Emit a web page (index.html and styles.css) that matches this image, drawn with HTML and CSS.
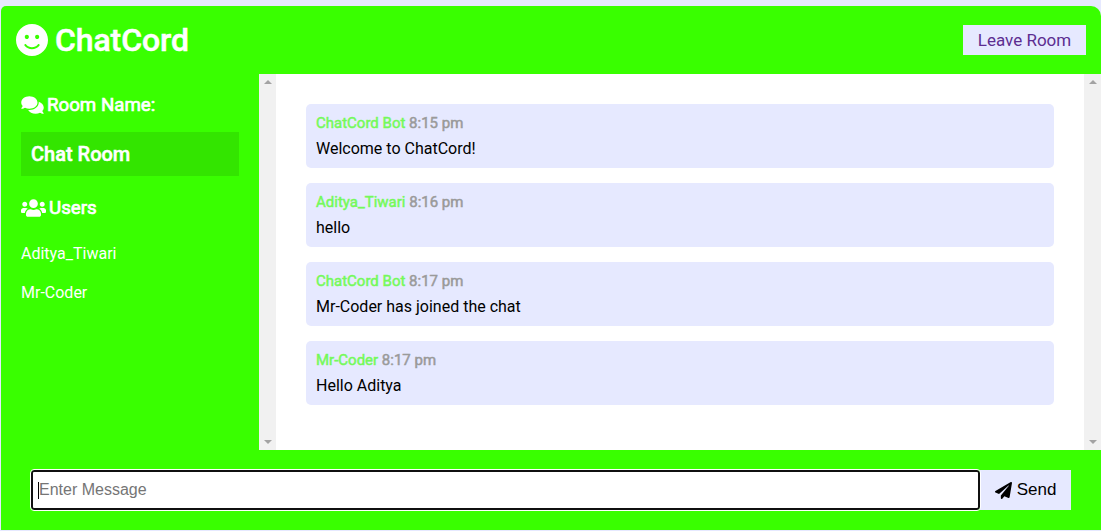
FILE: index.html
```html
<!DOCTYPE html>
<html lang="en">
<head>
<meta charset="UTF-8">
<meta name="viewport" content="width=device-width, initial-scale=1.0">
<title>ChatCord</title>
<link rel="stylesheet" href="styles.css">
</head>
<body>
	<div class="chat-container">
		<header class="chat-header">
			<h1>
				<svg class="logo-icon" viewBox="0 0 496 512"><path fill="currentColor" d="M248 8C111 8 0 119 0 256s111 248 248 248 248-111 248-248S385 8 248 8zm80 168c17.7 0 32 14.3 32 32s-14.3 32-32 32-32-14.3-32-32 14.3-32 32-32zm-160 0c17.7 0 32 14.3 32 32s-14.3 32-32 32-32-14.3-32-32 14.3-32 32-32zm194.8 170.2C334.3 380.4 292.5 400 248 400s-86.3-19.6-114.8-53.8c-13.6-16.3 11-36.7 24.6-20.5 22.4 26.9 55.2 42.2 90.2 42.2s67.8-15.4 90.2-42.2c13.4-16.2 38.1 4.2 24.6 20.5z"/></svg>
				ChatCord
			</h1>
			<a class="btn leave-btn" href="#">Leave Room</a>
		</header>
		<main class="chat-main">
			<div class="chat-sidebar">
				<h3>
					<svg class="side-icon" viewBox="0 0 576 512"><path fill="currentColor" d="M416 192c0-88.4-93.1-160-208-160S0 103.6 0 192c0 34.3 14.1 65.9 38 92-13.4 30.2-35.5 54.2-35.8 54.5-2.2 2.3-2.8 5.7-1.5 8.7S4.8 352 8 352c36.6 0 66.9-12.3 88.7-25 32.2 15.7 70.3 25 111.3 25 114.9 0 208-71.6 208-160zm122 220c23.9-26 38-57.7 38-92 0-66.9-53.5-124.2-129.3-148.1.9 6.6 1.3 13.3 1.3 20.1 0 105.9-107.7 192-240 192-10.8 0-21.3-.8-31.7-1.9C207.8 439.6 281.8 480 368 480c41 0 79.1-9.2 111.3-25 21.8 12.7 52.1 25 88.7 25 3.2 0 6.1-1.9 7.3-4.8 1.3-2.9.7-6.3-1.5-8.7-.3-.3-22.4-24.2-35.8-54.5z"/></svg>
					Room Name:
				</h3>
				<h2 class="room-name">Chat Room</h2>
				<h3>
					<svg class="side-icon users-icon" viewBox="0 0 640 512"><path fill="currentColor" d="M96 224c35.3 0 64-28.7 64-64s-28.7-64-64-64-64 28.7-64 64 28.7 64 64 64zm448 0c35.3 0 64-28.7 64-64s-28.7-64-64-64-64 28.7-64 64 28.7 64 64 64zm32 32h-64c-17.6 0-33.5 7.1-45.1 18.6 40.3 22.1 68.9 62 75.1 109.4h66c17.7 0 32-14.3 32-32v-32c0-35.3-28.7-64-64-64zm-256 0c61.9 0 112-50.1 112-112S381.9 32 320 32 208 82.1 208 144s50.1 112 112 112zm76.8 32h-8.3c-20.8 10-43.9 16-68.5 16s-47.6-6-68.5-16h-8.3C179.6 288 128 339.6 128 403.2V432c0 26.5 21.5 48 48 48h288c26.5 0 48-21.5 48-48v-28.8c0-63.6-51.6-115.2-115.2-115.2zm-223.7-13.4C161.5 263.1 145.6 256 128 256H64c-35.3 0-64 28.7-64 64v32c0 17.7 14.3 32 32 32h65.9c6.3-47.4 34.9-87.3 75.2-109.4z"/></svg>
					Users
				</h3>
				<ul class="users">
					<li>Aditya_Tiwari</li>
					<li>Mr-Coder</li>
				</ul>
			</div>
			<div class="scroll-track">
				<span class="arrow-up"></span>
				<span class="arrow-down"></span>
			</div>
			<div class="chat-messages">
				<div class="message">
					<p class="meta">ChatCord Bot <span>8:15 pm</span></p>
					<p class="text">Welcome to ChatCord!</p>
				</div>
				<div class="message">
					<p class="meta">Aditya_Tiwari <span>8:16 pm</span></p>
					<p class="text">hello</p>
				</div>
				<div class="message">
					<p class="meta">ChatCord Bot <span>8:17 pm</span></p>
					<p class="text">Mr-Coder has joined the chat</p>
				</div>
				<div class="message">
					<p class="meta">Mr-Coder <span>8:17 pm</span></p>
					<p class="text">Hello Aditya</p>
				</div>
			</div>
			<div class="scroll-track">
				<span class="arrow-up"></span>
				<span class="arrow-down"></span>
			</div>
		</main>
		<div class="chat-form-container">
			<form class="chat-form">
				<div class="msg-input">
					<span class="caret"></span>
					<input type="text" placeholder="Enter Message">
				</div>
				<button class="btn send-btn" type="button">
					<svg class="send-icon" viewBox="0 0 512 512"><path fill="currentColor" d="M476 3.2L12.5 270.6c-18.1 10.4-15.8 35.6 2.2 43.2L121 358.4l287.3-253.2c5.5-4.9 13.3 2.6 8.6 8.3L176 407v80.5c0 23.6 28.5 32.9 42.5 15.8L282 426l124.6 52.2c14.2 6 30.4-2.9 33-18.2l72-432C515 7.8 493.3-6.8 476 3.2z"/></svg>
					Send
				</button>
			</form>
		</div>
	</div>
</body>
</html>
```

FILE: styles.css
```css
* {
	box-sizing: border-box;
	margin: 0;
	padding: 0;
}
body {
	height: 531px;
	padding: 6px 0 1px 1px;
	overflow: hidden;
	font-family: Roboto, sans-serif;
	font-size: 16px;
	background: #e6e9ff;
}
ul {
	list-style: none;
}
.btn {
	display: inline-block;
	border: 0;
	color: #667aff;
	background: #e6e9ff;
	font-size: 17px;
	cursor: pointer;
}
.chat-container {
	height: 524px;
	background: #39ff00;
	border-radius: 5px 10px 0 0;
	overflow: hidden;
}
.chat-header {
	display: flex;
	align-items: center;
	justify-content: space-between;
	height: 68px;
	padding: 0 15px;
	color: #fff;
}
.chat-header h1 {
	display: flex;
	align-items: center;
	gap: 7px;
	font-size: 32px;
	font-weight: 500;
	letter-spacing: -0.1px;
	-webkit-text-stroke: 0.5px #fff;
}
.logo-icon {
	width: 32px;
	height: 36px;
}
.leave-btn {
	width: 123px;
	height: 30px;
	line-height: 30px;
	text-align: center;
	color: #5c2d91;
	text-decoration: none;
}
.chat-main {
	display: flex;
	height: 376px;
}
.chat-sidebar {
	width: 258px;
	padding: 19px 20px;
	color: #fff;
}
.chat-sidebar h3 {
	display: flex;
	align-items: center;
	gap: 3px;
	height: 24px;
	margin-bottom: 15px;
	font-size: 18.72px;
	font-weight: 400;
	-webkit-text-stroke: 0.7px #fff;
}
.side-icon {
	width: 23px;
	height: 20px;
	flex: none;
}
.users-icon {
	width: 25px;
}
.room-name {
	height: 44px;
	margin-bottom: 20px;
	padding: 0 10px;
	line-height: 44px;
	font-size: 20px;
	font-weight: 500;
	-webkit-text-stroke: 0.5px #fff;
	background: rgba(0, 0, 0, 0.1);
}
.users {
	padding-top: 6px;
}
.users li {
	height: 39px;
	padding-top: 1px;
	line-height: 24px;
}
.scroll-track {
	display: flex;
	flex-direction: column;
	justify-content: space-between;
	align-items: center;
	width: 17px;
	padding: 6px 0;
	background: #f1f1f1;
}
.arrow-up {
	border: 4px solid transparent;
	border-top: 0;
	border-bottom: 4px solid #a3a3a3;
}
.arrow-down {
	border: 4px solid transparent;
	border-bottom: 0;
	border-top: 4px solid #a3a3a3;
}
.chat-messages {
	flex: 1;
	display: flex;
	flex-direction: column;
	gap: 15px;
	padding: 30px;
	background: #fff;
}
.message {
	height: 64px;
	padding: 10px;
	background: #e6e9ff;
	border-radius: 5px;
}
.meta {
	height: 18px;
	margin-bottom: 7px;
	line-height: 18px;
	font-size: 15px;
	font-weight: 400;
	-webkit-text-stroke: 0.5px currentColor;
	color: #75f95a;
}
.meta span {
	color: #9a9a9a;
}
.text {
	line-height: 20px;
	color: #000;
}
.chat-form-container {
	padding: 20px 30px;
}
.chat-form {
	display: flex;
	width: 1040px;
}
.msg-input {
	position: relative;
	flex: 1;
	height: 40px;
}
.msg-input input {
	display: block;
	width: 100%;
	height: 40px;
	padding: 0 6px;
	border: 2px solid #101010;
	outline: 1px solid #fff;
	border-radius: 3px;
	font-family: "Liberation Sans", Arial, sans-serif;
	font-size: 16px;
	background: #fff;
}
.caret {
	position: absolute;
	top: 12px;
	left: 7px;
	width: 1px;
	height: 17px;
	background: #000;
}
.send-btn {
	display: flex;
	align-items: center;
	justify-content: center;
	gap: 5px;
	width: 91px;
	height: 40px;
	color: #000;
	font-family: "Liberation Sans", Arial, sans-serif;
}
.send-icon {
	width: 17px;
	height: 17px;
}
```
